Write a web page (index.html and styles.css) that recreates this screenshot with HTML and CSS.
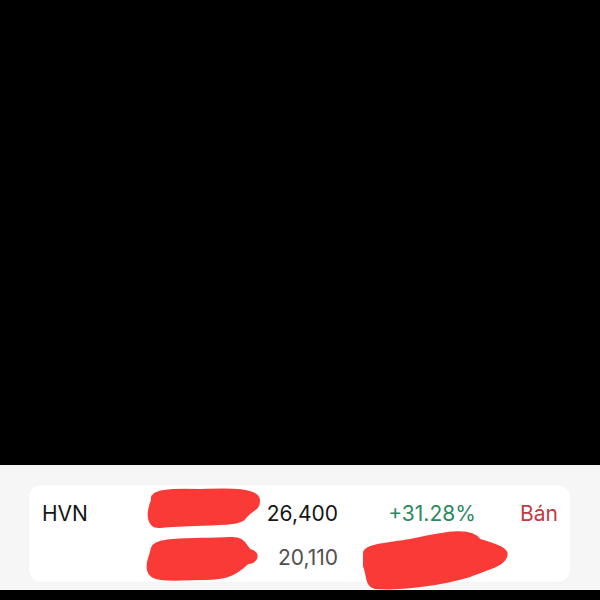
FILE: index.html
```html
<!DOCTYPE html>
<html lang="vi">
<head>
  <meta charset="UTF-8" />
  <meta name="viewport" content="width=device-width, initial-scale=1" />
  <title>Danh mục</title>
  <link rel="stylesheet" href="styles.css">
</head>
<body>

  <!-- Dark area above the list -->
  <div class="screen-top"></div>

  <!-- Holdings list -->
  <div class="list-panel">
    <div class="stock-card">
      <div class="cell symbol">HVN</div>
      <div class="cell price">26,400</div>
      <div class="cell change up">+31.28%</div>
      <div class="cell action sell">Bán</div>

      <div class="cell"></div>
      <div class="cell price cost">20,110</div>
      <div class="cell change"></div>
      <div class="cell action"></div>
    </div>
  </div>

  <div class="screen-bottom"></div>

  <!-- Red marker strokes drawn over the private numbers -->
  <svg class="redact" width="600" height="600" viewBox="0 0 600 600">
    <g fill="#f93a36" stroke="#f93a36" stroke-width="2" stroke-linejoin="round">
      <path d="M152 500 C150 490, 170 489, 200 490 C230 489, 258 488, 259 500 C260 510, 250 510, 245 518 C240 527, 200 523, 160 527 C148 528, 146 515, 152 500 Z" />
      <path d="M152 548 C155 537, 190 540, 230 538 C245 537, 245 546, 250 550 C260 553, 258 562, 248 563 C240 570, 232 580, 200 579 C170 580, 150 582, 148 570 C146 562, 150 558, 152 548 Z" />
      <path d="M364 555 C362 545, 380 545, 410 540 C440 534, 470 526, 480 540 C495 545, 510 548, 506 557 C502 566, 490 568, 470 576 C440 585, 400 590, 375 588 C365 585, 368 575, 364 566 Z" />
    </g>
  </svg>

</body>
</html>
```

FILE: styles.css
```css
body {
  margin: 0;
  padding: 0;
  background: #000;
  font-family: 'Inter', 'Liberation Sans', Arial, sans-serif;
  position: relative;
  width: 600px;
  height: 600px;
  overflow: hidden;
}

.screen-top {
  height: 465px;
  background: #000;
}

.list-panel {
  height: 125px;
  box-sizing: border-box;
  padding: 20px 30px 0 29px;
  background: #f6f6f7;
}

.stock-card {
  display: grid;
  grid-template-columns: 100px 196px 1fr auto;
  grid-auto-rows: 44px;
  align-items: center;
  height: 97px;
  box-sizing: border-box;
  padding: 6px 12px 3px 13px;
  background: #fff;
  border-radius: 12px;
  box-shadow: 0 0 2px rgba(0, 0, 0, 0.04);
}

.cell {
  font-size: 21px;
  line-height: 1;
  white-space: nowrap;
}

.symbol {
  color: #151515;
}

.price {
  text-align: right;
  color: #151515;
}

.price.cost {
  color: #505050;
}

.change {
  text-align: center;
  padding-left: 6px;
}

.up {
  color: #2a8a62;
}

.sell {
  color: #c23a42;
  text-align: right;
}

.screen-bottom {
  height: 10px;
  background: #000;
}

.redact {
  position: absolute;
  top: 0;
  left: 0;
  pointer-events: none;
}
```
